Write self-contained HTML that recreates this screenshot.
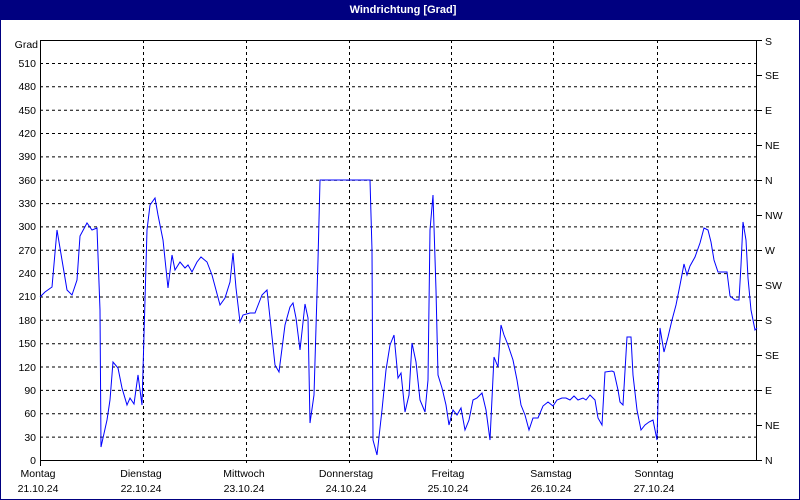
<!DOCTYPE html>
<html><head><style>
html,body{margin:0;padding:0;background:#fff}
svg{display:block}
text{font-family:"Liberation Sans",sans-serif;font-size:10.5px;fill:#000}
</style></head><body>
<svg width="800" height="500" xmlns="http://www.w3.org/2000/svg">
<rect x="0" y="0" width="800" height="500" fill="#fff"/>
<rect x="0.5" y="0.5" width="799" height="499" fill="none" stroke="#000080"/>
<rect x="0" y="0" width="800" height="20" fill="#000080"/>
<text x="403" y="13" text-anchor="middle" style="fill:#fff;font-weight:bold;font-size:11px">Windrichtung [Grad]</text>
<g stroke="#000" stroke-dasharray="3,3" stroke-width="1">
<line x1="40" y1="63.5" x2="757" y2="63.5"/><line x1="40" y1="86.8" x2="757" y2="86.8"/>
<line x1="40" y1="110.2" x2="757" y2="110.2"/><line x1="40" y1="133.5" x2="757" y2="133.5"/>
<line x1="40" y1="156.9" x2="757" y2="156.9"/><line x1="40" y1="180.2" x2="757" y2="180.2"/>
<line x1="40" y1="203.6" x2="757" y2="203.6"/><line x1="40" y1="226.9" x2="757" y2="226.9"/>
<line x1="40" y1="250.3" x2="757" y2="250.3"/><line x1="40" y1="273.6" x2="757" y2="273.6"/>
<line x1="40" y1="297" x2="757" y2="297"/><line x1="40" y1="320.3" x2="757" y2="320.3"/>
<line x1="40" y1="343.7" x2="757" y2="343.7"/><line x1="40" y1="367" x2="757" y2="367"/>
<line x1="40" y1="390.4" x2="757" y2="390.4"/><line x1="40" y1="413.7" x2="757" y2="413.7"/>
<line x1="40" y1="437.1" x2="757" y2="437.1"/>
<line x1="143.5" y1="40" x2="143.5" y2="466"/><line x1="246.5" y1="40" x2="246.5" y2="466"/>
<line x1="349.5" y1="40" x2="349.5" y2="466"/><line x1="451.5" y1="40" x2="451.5" y2="466"/>
<line x1="553.5" y1="40" x2="553.5" y2="466"/><line x1="657.5" y1="40" x2="657.5" y2="466"/>
</g>
<rect x="40.5" y="40.5" width="716" height="420" fill="none" stroke="#000"/>
<line x1="40.5" y1="460" x2="40.5" y2="466" stroke="#000"/>
<g text-anchor="end">
<text x="38" y="48">Grad</text>
<text x="36" y="67">510</text><text x="36" y="90">480</text><text x="36" y="114">450</text>
<text x="36" y="137">420</text><text x="36" y="160">390</text><text x="36" y="184">360</text>
<text x="36" y="207">330</text><text x="36" y="230">300</text><text x="36" y="254">270</text>
<text x="36" y="277">240</text><text x="36" y="300">210</text><text x="36" y="324">180</text>
<text x="36" y="347">150</text><text x="36" y="371">120</text><text x="36" y="394">90</text>
<text x="36" y="417">60</text><text x="36" y="441">30</text><text x="36" y="464">0</text>
</g>
<g stroke="#000">
<line x1="757" y1="40.5" x2="762" y2="40.5"/><line x1="757" y1="75.5" x2="762" y2="75.5"/>
<line x1="757" y1="110.5" x2="762" y2="110.5"/><line x1="757" y1="145.5" x2="762" y2="145.5"/>
<line x1="757" y1="180.5" x2="762" y2="180.5"/><line x1="757" y1="215.5" x2="762" y2="215.5"/>
<line x1="757" y1="250.5" x2="762" y2="250.5"/><line x1="757" y1="285.5" x2="762" y2="285.5"/>
<line x1="757" y1="320.5" x2="762" y2="320.5"/><line x1="757" y1="355.5" x2="762" y2="355.5"/>
<line x1="757" y1="390.5" x2="762" y2="390.5"/><line x1="757" y1="425.5" x2="762" y2="425.5"/>
<line x1="757" y1="460.5" x2="762" y2="460.5"/>
</g>
<g>
<text x="765" y="45">S</text><text x="765" y="79">SE</text><text x="765" y="114">E</text>
<text x="765" y="149">NE</text><text x="765" y="184">N</text><text x="765" y="219">NW</text>
<text x="765" y="254">W</text><text x="765" y="289">SW</text><text x="765" y="324">S</text>
<text x="765" y="359">SE</text><text x="765" y="394">E</text><text x="765" y="429">NE</text>
<text x="765" y="464">N</text>
</g>
<g text-anchor="middle">
<text x="38" y="477">Montag</text><text x="38" y="492">21.10.24</text>
<text x="141" y="477">Dienstag</text><text x="141" y="492">22.10.24</text>
<text x="244" y="477">Mittwoch</text><text x="244" y="492">23.10.24</text>
<text x="346" y="477">Donnerstag</text><text x="346" y="492">24.10.24</text>
<text x="448" y="477">Freitag</text><text x="448" y="492">25.10.24</text>
<text x="551" y="477">Samstag</text><text x="551" y="492">26.10.24</text>
<text x="654" y="477">Sonntag</text><text x="654" y="492">27.10.24</text>
</g>
<polyline fill="none" stroke="#0000ff" stroke-width="1" points="40,297 45,292 52,287 57,230 62,260 67,290 72,295 77,280 80,236 87,223 92,230 97,228 100,310 101,447 107,420 110,400 113,362 118,368 122,388 127,405 130,398 134,404 138,375 142,405 147,230 150,205 155,198 158,215 163,240 168,288 172,255 175,270 180,262 185,268 188,265 192,272 197,262 201,257 207,262 212,275 216,290 220,305 225,298 230,282 233,253 236,288 240,322 243,315 250,313 255,313 262,295 267,290 270,318 275,365 279,372 285,325 290,307 293,303 296,318 300,350 305,304 308,318 310,423 314,395 318,260 320,180 370,180 372,250 373,440 377,455 382,410 386,370 390,345 394,335 398,378 401,373 405,412 409,395 412,343 416,362 420,400 425,412 428,380 430,230 433,195 436,290 438,375 442,388 446,405 449,425 453,410 457,415 461,408 465,430 469,420 473,400 477,398 482,393 486,410 490,440 494,357 498,367 501,325 504,335 508,345 513,360 517,380 521,405 525,415 529,430 533,418 538,418 543,406 548,402 553,406 557,400 562,398 566,398 570,400 574,396 578,400 583,398 586,400 590,395 595,400 598,418 602,425 605,372 612,371 614,372 618,390 620,402 623,405 627,337 631,337 633,375 637,410 641,430 645,425 649,422 653,420 657,440 660,328 664,352 668,337 672,320 676,305 680,285 684,264 687,275 690,266 695,257 700,243 704,228 708,230 711,242 714,260 718,272 724,272 727,272 730,296 735,300 739,300 741,265 743,222 746,240 748,278 751,310 755,330 757,328"/>
</svg>
</body></html>
